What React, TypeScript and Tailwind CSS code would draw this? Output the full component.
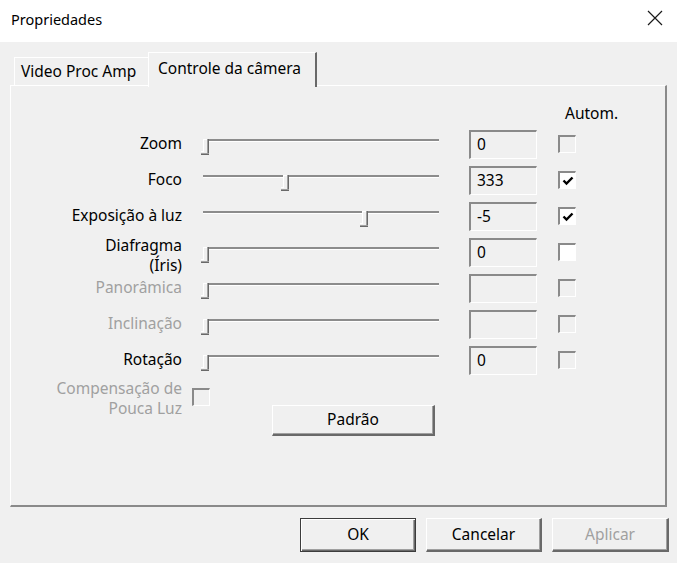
import React from "react";

type Row = {
  label: string[];
  value: string;
  thumb: number;
  checked: boolean;
  disabled?: boolean;
  whiteBox?: boolean;
};

const rows: Row[] = [
  { label: ["Zoom"], value: "0", thumb: 0, checked: false },
  { label: ["Foco"], value: "333", thumb: 80, checked: true },
  { label: ["Exposição à luz"], value: "-5", thumb: 159, checked: true },
  { label: ["Diafragma", "(Íris)"], value: "0", thumb: 0, checked: false, whiteBox: true },
  { label: ["Panorâmica"], value: "", thumb: 0, checked: false, disabled: true },
  { label: ["Inclinação"], value: "", thumb: 0, checked: false, disabled: true },
  { label: ["Rotação"], value: "0", thumb: 0, checked: false },
];

function Thumb({ left }: { left: number }) {
  return (
    <svg
      className="absolute top-0"
      style={{ left: left - 2 }}
      width="9"
      height="16"
      viewBox="0 0 9 16"
    >
      <rect x="2" y="0" width="5" height="14" fill="#f0f0f0" />
      <line x1="2.5" y1="0" x2="2.5" y2="13" stroke="#ffffff" />
      <line x1="2" y1="0.5" x2="6" y2="0.5" stroke="#ffffff" />
      <line x1="6.5" y1="0" x2="6.5" y2="15" stroke="#a0a0a0" />
      <line x1="7.5" y1="0" x2="7.5" y2="16" stroke="#696969" />
      <line x1="0" y1="12.5" x2="3" y2="12.5" stroke="#ffffff" />
      <line x1="0" y1="14.5" x2="8" y2="14.5" stroke="#a0a0a0" />
      <line x1="0" y1="15.5" x2="8" y2="15.5" stroke="#696969" />
    </svg>
  );
}

function Slider({ thumb }: { thumb: number }) {
  return (
    <div className="relative h-[16px] w-[244px] px-[4px]">
      <div className="mt-[5px] h-[3px] bg-[#8c8c8c] border-b border-white" />
      <Thumb left={4 + thumb} />
    </div>
  );
}

function Check({ checked, white }: { checked: boolean; white?: boolean }) {
  return (
    <div
      className={`w-[18px] h-[18px] border-t-2 border-l-2 border-[#8a8a8a] border-r border-b border-r-white border-b-white flex items-center justify-center ${
        checked || white ? "bg-white" : "bg-[#f0f0f0]"
      }`}
    >
      {checked && (
        <svg width="12" height="12" viewBox="0 0 12 12">
          <path d="M1.5 5.5 L4.5 8.5 L10.5 2.5" fill="none" stroke="#000" strokeWidth="2.4" />
        </svg>
      )}
    </div>
  );
}

function Button({
  children,
  width,
  height,
  primary,
  disabled,
}: {
  children: React.ReactNode;
  width: string;
  height: string;
  primary?: boolean;
  disabled?: boolean;
}) {
  return (
    <button
      type="button"
      className={`${width} ${height} bg-[#f0f0f0] flex items-center justify-center ${
        primary
          ? "border border-[#3c3c3c] shadow-[inset_1px_1px_0_#ffffff,inset_-1px_-1px_0_#696969,inset_-2px_-2px_0_#a0a0a0]"
          : "border-t border-l border-t-white border-l-white border-r-2 border-b-2 border-r-[#696969] border-b-[#696969] shadow-[inset_-1px_-1px_0_#a0a0a0]"
      } ${disabled ? "text-[#a0a0a0]" : "text-black"}`}
    >
      {children}
    </button>
  );
}

export default function App() {
  return (
    <div className="w-[677px] h-[563px] bg-[#f0f0f0] flex flex-col overflow-hidden text-[15.5px] text-black font-['Noto_Sans',sans-serif]">
      {/* Title bar */}
      <div className="h-[42px] bg-white flex items-center justify-between pl-[11px] pr-[14px] shrink-0">
        <span className="text-[14.5px] -mt-[3px]">Propriedades</span>
        <svg width="16" height="16" viewBox="0 0 16 16" className="-mt-[6px]">
          <path d="M1 1 L15 15 M15 1 L1 15" stroke="#1a1a1a" strokeWidth="1.2" />
        </svg>
      </div>

      <div className="flex flex-col px-[10px] pt-[10px]">
        {/* Tabs */}
        <div className="flex items-end h-[33px]">
          <div className="ml-[4px] w-[134px] h-[28px] border-t border-l border-white pl-[6px] flex items-center">
            Video Proc Amp
          </div>
          <div className="relative z-10 w-[169px] h-[35px] -mb-[2px] bg-[#f0f0f0] border-t border-l border-white border-r-2 border-r-[#696969] pl-[9px] pb-[3px] flex items-center">
            Controle da câmera
          </div>
        </div>

        {/* Panel */}
        <div className="h-[422px] border-t border-l border-white border-r-2 border-b-2 border-r-[#8a8a8a] border-b-[#8a8a8a] flex flex-col pt-[15px]">
          <div className="ml-[554px] h-[25px] leading-[25px]">Autom.</div>

          {rows.map((r) => (
            <div key={r.label.join(" ")} className="flex items-center h-[36px]">
              <div
                className={`w-[171px] text-right ${
                  r.label.length > 1 ? "mt-[6px] leading-[20px]" : "-mt-[2px] leading-[20px]"
                } ${r.disabled ? "text-[#a0a0a0]" : ""}`}
              >
                {r.label.map((l) => (
                  <div key={l}>{l}</div>
                ))}
              </div>
              <div className="ml-[17px]">
                <Slider thumb={r.thumb} />
              </div>
              <div className="ml-[26px] w-[68px] h-[29px] border-t-2 border-l-2 border-[#8a8a8a] border-r border-b border-r-white border-b-white pl-[6px] flex items-center">
                {r.value}
              </div>
              <div className="ml-[21px]">
                <Check checked={r.checked} white={r.whiteBox} />
              </div>
            </div>
          ))}

          <div className="flex items-start">
            <div className="w-[171px] text-right leading-[20px] text-[#a0a0a0]">
              <div>Compensação de</div>
              <div>Pouca Luz</div>
            </div>
            <div className="ml-[10px] mt-[10px]">
              <Check checked={false} />
            </div>
            <div className="ml-[62px] mt-[27px]">
              <Button width="w-[163px]" height="h-[31px]">
                Padrão
              </Button>
            </div>
          </div>
        </div>
      </div>

      {/* Bottom buttons */}
      <div className="flex justify-end gap-[10px] pr-[8px] mt-[11px]">
        <Button width="w-[116px]" height="h-[34px]" primary>
          OK
        </Button>
        <Button width="w-[116px]" height="h-[34px]">
          Cancelar
        </Button>
        <Button width="w-[117px]" height="h-[34px]" disabled>
          Aplicar
        </Button>
      </div>
    </div>
  );
}
